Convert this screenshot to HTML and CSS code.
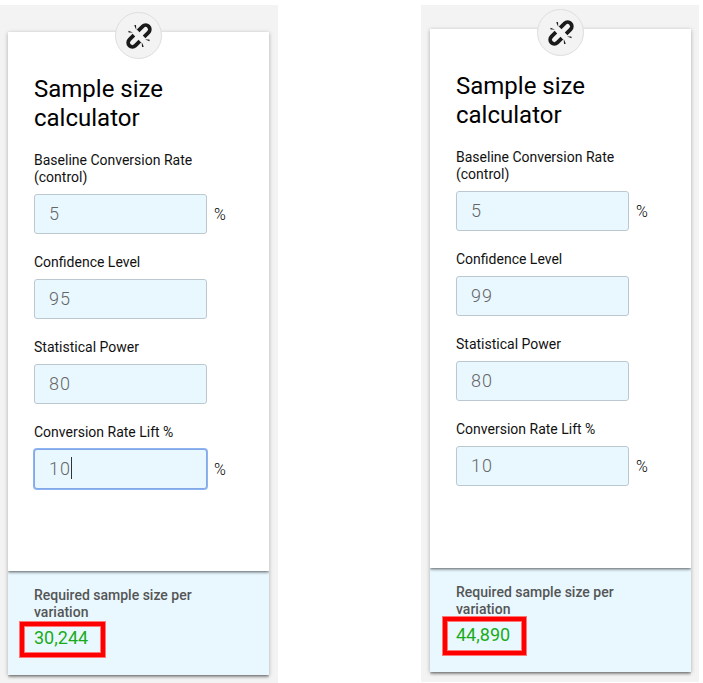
FILE: index.html
```
<!DOCTYPE html>
<html lang="en">

<head>
    <meta charset="UTF-8">
    <meta name="viewport" content="width=device-width, initial-scale=1.0">
    <title>Sample size calculator</title>
    <link rel="stylesheet" href="styles.css">
</head>

<body>
    <svg class="symbols">
        <symbol id="broken-link" viewBox="-14 -14 28 28">
            <g transform="rotate(-45)" fill="none" stroke="currentColor" stroke-width="3.7">
                <path d="M3 -4.2H9.4A4.2 4.2 0 0 1 9.4 4.2H3" />
                <path d="M-3 -4.2H-9.4A4.2 4.2 0 0 0 -9.4 4.2H-3" />
            </g>
            <path fill="currentColor" d="M-10.7 -5.3L-6 -3.4L-10.3 -3.5ZM-4.8 -10.8L-3 -11L-2.7 -6ZM10.7 5.3L6 3.4L10.3 3.5ZM4.8 10.8L3 11L2.7 6Z" />
        </symbol>
    </svg>
    <div id="main">
        <div class="panel">
            <div class="card">
                <div class="badge"><svg><use href="#broken-link" /></svg></div>
                <div class="form">
                    <h2>Sample size calculator</h2>
                    <label>Baseline Conversion Rate (control)</label>
                    <div class="field"><div class="input">5</div><span>%</span></div>
                    <label>Confidence Level</label>
                    <div class="field"><div class="input">95</div></div>
                    <label>Statistical Power</label>
                    <div class="field"><div class="input">80</div></div>
                    <label>Conversion Rate Lift %</label>
                    <div class="field"><div class="input focused">10<i class="caret"></i></div><span>%</span></div>
                </div>
                <div class="result">
                    <h3>Required sample size per variation</h3>
                    <div class="value">30,244<div class="marker"></div></div>
                </div>
            </div>
        </div>
        <div class="panel second">
            <div class="card">
                <div class="badge"><svg><use href="#broken-link" /></svg></div>
                <div class="form">
                    <h2>Sample size calculator</h2>
                    <label>Baseline Conversion Rate (control)</label>
                    <div class="field"><div class="input">5</div><span>%</span></div>
                    <label>Confidence Level</label>
                    <div class="field"><div class="input">99</div></div>
                    <label>Statistical Power</label>
                    <div class="field"><div class="input">80</div></div>
                    <label>Conversion Rate Lift %</label>
                    <div class="field"><div class="input">10</div><span>%</span></div>
                </div>
                <div class="result">
                    <h3>Required sample size per variation</h3>
                    <div class="value">44,890<div class="marker"></div></div>
                </div>
            </div>
        </div>
    </div>
</body>

</html>
```

FILE: styles.css
```
* {
    box-sizing: border-box;
}

body {
    margin: 0;
    background-color: #fff;
    color: #111;
    font-family: Roboto, "Liberation Sans", sans-serif;
    font-size: 14px;
    overflow: hidden;
}

.symbols {
    display: none;
}

#main {
    display: flex;
    gap: 143px;
    height: 683px;
    padding-top: 5px;
}

.panel {
    width: 278px;
    height: 678px;
    padding: 27px 9px 0 8px;
    background-color: #f3f3f3;
}

.panel.second {
    height: 677px;
    padding: 24px 8px 0 9px;
}

.card {
    position: relative;
    box-shadow: 0 1px 4px rgba(0, 0, 0, 0.3);
}

.badge {
    position: absolute;
    top: -20px;
    left: 107px;
    z-index: 2;
    display: flex;
    justify-content: center;
    align-items: center;
    width: 47px;
    height: 47px;
    border: 1px solid #dedede;
    border-radius: 50%;
    background-color: #f3f3f3;
    color: #1a1a1a;
}

.badge svg {
    width: 28px;
    height: 28px;
}

.form {
    position: relative;
    z-index: 1;
    height: 539px;
    padding: 43px 26px 0;
    background-color: #fff;
    box-shadow: 0 1px 3px rgba(0, 0, 0, 0.65);
    clip-path: inset(0 0 -5px 0);
}

h2 {
    width: 180px;
    margin: 0 0 19px;
    color: #000;
    font-size: 24px;
    font-weight: 400;
    line-height: 29px;
}

label {
    display: block;
    width: 175px;
    line-height: 17px;
}

.field {
    display: flex;
    align-items: center;
    gap: 7px;
    margin: 8px 0 20px;
}

.field span {
    color: #000;
    font-size: 16px;
    font-weight: 300;
}

.input {
    display: flex;
    align-items: center;
    width: 173px;
    height: 40px;
    padding: 0 0 2px 14px;
    border: 1px solid #bcc8d0;
    border-radius: 3px;
    background-color: #e9f8ff;
    color: #666;
    font-size: 18px;
    font-weight: 300;
    letter-spacing: 1px;
}

.input.focused {
    border-color: #83a8e8;
    box-shadow: 0 0 0 1px #8fb4f2;
}

.caret {
    width: 1px;
    height: 22px;
    background-color: #333;
}

.result {
    height: 104px;
    padding: 16px 26px 0;
    background-color: #e9f8ff;
    box-shadow: 0 1px 3px rgba(0, 0, 0, 0.5);
    clip-path: inset(0 0 -5px 0);
}

h3 {
    width: 175px;
    margin: 0 0 6px;
    color: #555;
    font-size: 14px;
    font-weight: 500;
    line-height: 17px;
}

.value {
    position: relative;
    color: #1aab1a;
    font-size: 18px;
    line-height: 22px;
}

/* red frame drawn over the number */
.marker {
    position: absolute;
    top: -6px;
    left: -15px;
    width: 87px;
    height: 37px;
    border: 5px solid #f00;
    outline: 1px solid #f77;
    outline-offset: -1px;
    box-shadow: inset 0 0 0 1px #f77;
}

.second .marker {
    top: -8px;
    left: -14px;
    width: 85px;
    height: 40px;
}
```
